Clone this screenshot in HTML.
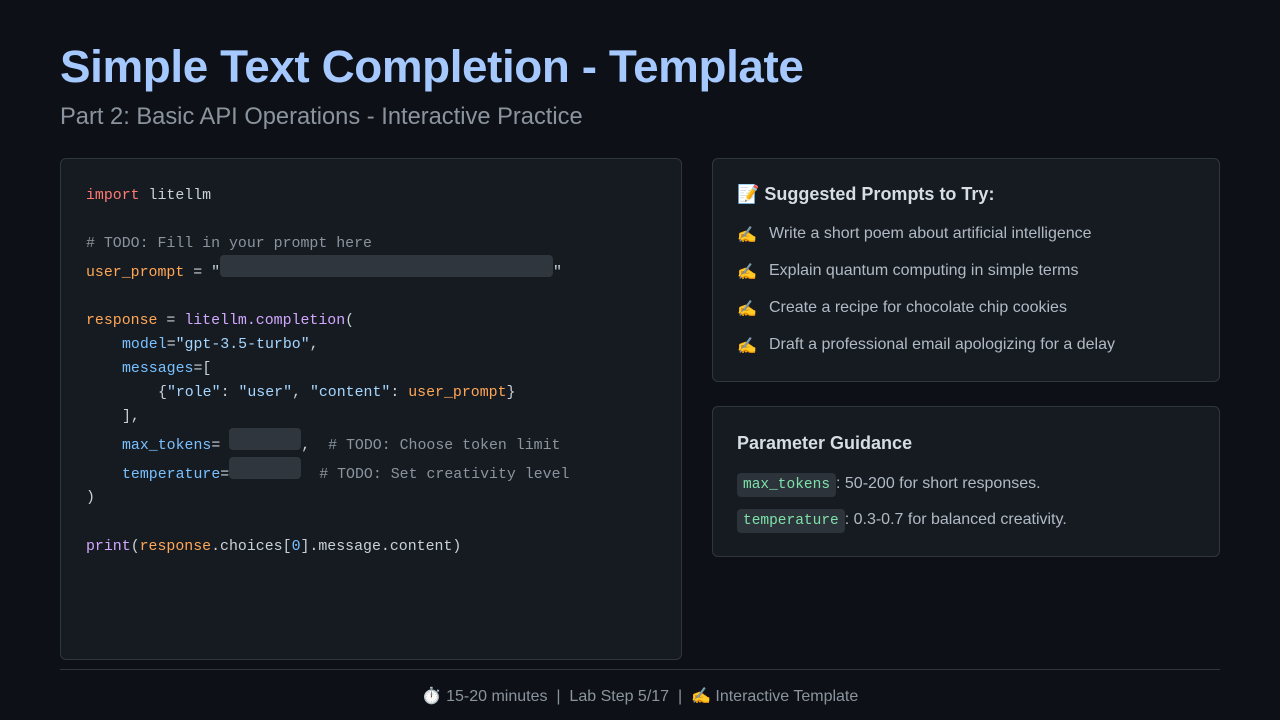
<!DOCTYPE html>
<html><head><meta charset="utf-8"><style>
*{margin:0;padding:0;box-sizing:border-box}
body{width:1280px;height:720px;background:#0d1117;font-family:"Liberation Sans","Noto Sans CJK SC",sans-serif;position:relative;overflow:hidden;color:#c9d1d9}
.abs{position:absolute;white-space:pre}
h1{position:absolute;left:60px;top:41px;font-size:45.8px;font-weight:bold;color:#a5c8ff;letter-spacing:-0.4px;white-space:nowrap}
.sub{left:60px;top:104px;font-size:23.7px;color:#8b949e}
.card{position:absolute;background:#161b22;border:1px solid #30363d;border-radius:6px}
.code{font-family:"Liberation Mono",monospace;font-size:14.9px;color:#c9d1d9}
.code .abs{left:25px}
.k{color:#ff7b72}.c{color:#8b949e}.v{color:#ffa657}.f{color:#d2a8ff}.p{color:#79c0ff}.s{color:#a5d6ff}
.blank{position:absolute;background:#30363d;border-radius:4px}
.item{position:absolute;left:24px;font-size:16px;color:#b1bac4;white-space:nowrap}
.item span{position:absolute;left:32px;top:0}
.tag{font-family:"Liberation Mono",monospace;background:#2d333b;color:#7ee2a8;padding:4px 6px;border-radius:4px;font-size:14.5px}
</style></head><body>
<h1>Simple Text Completion - Template</h1>
<div class="abs sub">Part 2: Basic API Operations - Interactive Practice</div>

<div class="card code" style="left:60px;top:158px;width:622px;height:502px">
<div class="abs" style="top:29px"><span class="k">import</span> litellm</div>
<div class="abs c" style="top:77px"># TODO: Fill in your prompt here</div>
<div class="abs" style="top:106px"><span class="v">user_prompt</span> = "<span style="display:inline-block;width:333px"></span>"</div>
<div class="blank" style="left:159px;top:96px;width:333px;height:22px"></div>
<div class="abs" style="top:154px"><span class="v">response</span> = <span class="f">litellm.completion</span>(</div>
<div class="abs" style="top:178px;left:61px"><span class="p">model</span>=<span class="s">"gpt-3.5-turbo"</span>,</div>
<div class="abs" style="top:202px;left:61px"><span class="p">messages</span>=[</div>
<div class="abs" style="top:226px;left:97px">{<span class="s">"role"</span>: <span class="s">"user"</span>, <span class="s">"content"</span>: <span class="v">user_prompt</span>}</div>
<div class="abs" style="top:250px;left:61px">],</div>
<div class="abs" style="top:279px;left:61px"><span class="p">max_tokens</span>=<span style="display:inline-block;width:81px"></span>,  <span class="c"># TODO: Choose token limit</span></div>
<div class="blank" style="left:168px;top:269px;width:72px;height:22px"></div>
<div class="abs" style="top:308px;left:61px"><span class="p">temperature</span>=<span style="display:inline-block;width:90px"></span><span class="c"># TODO: Set creativity level</span></div>
<div class="blank" style="left:168px;top:298px;width:72px;height:22px"></div>
<div class="abs" style="top:331px">)</div>
<div class="abs" style="top:380px"><span class="f">print</span>(<span class="v">response</span>.choices[<span class="p">0</span>].message.content)</div>
</div>

<div class="card" style="left:712px;top:158px;width:508px;height:224px">
<div class="abs" style="left:24px;top:25px;font-size:18px;font-weight:bold;color:#d6dde4">📝 Suggested Prompts to Try:</div>
<div class="item" style="top:66px">✍️<span>Write a short poem about artificial intelligence</span></div>
<div class="item" style="top:103px">✍️<span>Explain quantum computing in simple terms</span></div>
<div class="item" style="top:140px">✍️<span>Create a recipe for chocolate chip cookies</span></div>
<div class="item" style="top:177px">✍️<span>Draft a professional email apologizing for a delay</span></div>
</div>

<div class="card" style="left:712px;top:406px;width:508px;height:151px">
<div class="abs" style="left:24px;top:26px;font-size:18px;font-weight:bold;color:#d6dde4">Parameter Guidance</div>
<div class="abs" style="left:24px;top:68px;font-size:16px;color:#b1bac4"><span class="tag">max_tokens</span>: 50-200 for short responses.</div>
<div class="abs" style="left:24px;top:104px;font-size:16px;color:#b1bac4"><span class="tag">temperature</span>: 0.3-0.7 for balanced creativity.</div>
</div>

<div style="position:absolute;left:60px;top:669px;width:1160px;height:1px;background:#30363d"></div>
<div class="abs" style="left:0;width:1280px;text-align:center;top:686px;font-size:16px;color:#8b949e;white-space:nowrap">⏱️ 15-20 minutes &nbsp;|&nbsp; Lab Step 5/17 &nbsp;|&nbsp; ✍️ Interactive Template</div>
</body></html>
